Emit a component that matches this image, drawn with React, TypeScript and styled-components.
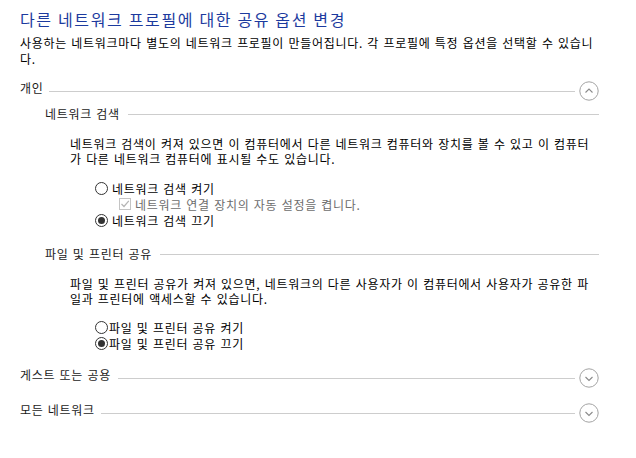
import React from "react";
import styled, { createGlobalStyle } from "styled-components";

const GlobalStyle = createGlobalStyle`
  html, body { margin: 0; padding: 0; background: #ffffff; }
  body {
    font-family: "Noto Sans CJK KR", "Noto Sans", sans-serif;
    font-size: 12px;
    letter-spacing: 0.7px;
    word-spacing: 1px;
    color: #000000;
  }
`;

const Page = styled.div`
  padding: 9px 37px 0 20px;
`;

const Title = styled.h1`
  margin: 0;
  font-size: 16px;
  font-weight: 400;
  line-height: 21px;
  letter-spacing: 1.65px;
  word-spacing: 0;
  color: #1c3a9e;
`;

const Intro = styled.p`
  margin: 5px 0 0;
  line-height: 16px;
`;

const HeaderRow = styled.div<{ $top: number; $indent?: number; $h?: number }>`
  display: flex;
  align-items: center;
  height: ${(p) => p.$h ?? 20}px;
  margin-top: ${(p) => p.$top}px;
  margin-left: ${(p) => p.$indent ?? 0}px;
`;

const HeaderLabel = styled.span<{ $lift?: number }>`
  line-height: 16px;
  padding-bottom: ${(p) => p.$lift ?? 0}px;
  color: #1a1a1a;
  white-space: nowrap;
`;

const Rule = styled.div<{ $gap?: number }>`
  flex: 1;
  height: 1px;
  background: #cdcdcd;
  margin-left: ${(p) => p.$gap ?? 7}px;
`;

const ToggleButton = styled.button`
  width: 20px;
  height: 20px;
  padding: 0;
  margin-left: 4px;
  border: none;
  background: transparent;
  display: flex;
  align-items: center;
  justify-content: center;
`;

const Description = styled.p<{ $top: number }>`
  margin: ${(p) => p.$top}px 0 0 50px;
  line-height: 15px;
`;

const OptionList = styled.div<{ $top: number }>`
  margin: ${(p) => p.$top}px 0 0 75px;
  display: flex;
  flex-direction: column;
`;

const OptionRow = styled.label<{ $gap: number; $sub?: boolean; $disabled?: boolean }>`
  display: flex;
  align-items: center;
  height: 16px;
  gap: ${(p) => p.$gap}px;
  margin-left: ${(p) => (p.$sub ? 24 : 0)}px;
  color: ${(p) => (p.$disabled ? "#6d6d6d" : "#000000")};
  white-space: nowrap;
`;

const RadioDot = styled.span<{ $checked?: boolean }>`
  box-sizing: border-box;
  width: 13px;
  height: 13px;
  border-radius: 50%;
  border: 1px solid #333333;
  background: #ffffff;
  display: flex;
  align-items: center;
  justify-content: center;
  flex: none;
  &::after {
    content: "";
    display: ${(p) => (p.$checked ? "block" : "none")};
    width: 7px;
    height: 7px;
    border-radius: 50%;
    background: #333333;
  }
`;

const CheckBox = styled.span`
  box-sizing: border-box;
  width: 12px;
  height: 12px;
  border: 1px solid #c4c4c4;
  background: #ffffff;
  display: flex;
  align-items: center;
  justify-content: center;
  flex: none;
`;

const Chevron: React.FC<{ up?: boolean }> = ({ up }) => (
  <svg width="20" height="20" viewBox="0 0 20 20">
    <circle cx="10" cy="10" r="9.2" fill="#fff" stroke="#a3a3a3" strokeWidth="1" />
    {up ? (
      <path d="M6.5 11.5 L10 8 L13.5 11.5" fill="none" stroke="#8a8a8a" strokeWidth="1.1" />
    ) : (
      <path d="M6.5 9 L10 12.5 L13.5 9" fill="none" stroke="#8a8a8a" strokeWidth="1.1" />
    )}
  </svg>
);

const SectionHeader: React.FC<{ label: string; top: number; up?: boolean; gap?: number }> = ({
  label,
  top,
  up,
  gap,
}) => (
  <HeaderRow $top={top}>
    <HeaderLabel $lift={6}>{label}</HeaderLabel>
    <Rule $gap={gap} />
    <ToggleButton aria-label={label}>
      <Chevron up={up} />
    </ToggleButton>
  </HeaderRow>
);

const SubHeader: React.FC<{ label: string; top: number }> = ({ label, top }) => (
  <HeaderRow $top={top} $indent={25} $h={16}>
    <HeaderLabel>{label}</HeaderLabel>
    <Rule $gap={8} />
  </HeaderRow>
);

const Radio: React.FC<{ label: string; checked?: boolean; gap: number }> = ({ label, checked, gap }) => (
  <OptionRow $gap={gap}>
    <RadioDot $checked={checked} />
    <span>{label}</span>
  </OptionRow>
);

export default function App() {
  return (
    <>
      <GlobalStyle />
      <Page>
        <Title>다른 네트워크 프로필에 대한 공유 옵션 변경</Title>
        <Intro>
          사용하는 네트워크마다 별도의 네트워크 프로필이 만들어집니다. 각 프로필에 특정 옵션을 선택할 수 있습니다.
        </Intro>

        <SectionHeader label="개인" top={14} up gap={6} />

        <SubHeader label="네트워크 검색" top={5} />
        <Description $top={14}>
          네트워크 검색이 켜져 있으면 이 컴퓨터에서 다른 네트워크 컴퓨터와 장치를 볼 수 있고 이 컴퓨터가 다른 네트워크 컴퓨터에 표시될 수도 있습니다.
        </Description>
        <OptionList $top={14}>
          <Radio label="네트워크 검색 켜기" gap={4} />
          <OptionRow $gap={4} $sub $disabled>
            <CheckBox>
              <svg width="10" height="10" viewBox="0 0 10 10">
                <path d="M1.5 5 L4 7.5 L8.8 1.8" fill="none" stroke="#b5b5b5" strokeWidth="1.2" />
              </svg>
            </CheckBox>
            <span>네트워크 연결 장치의 자동 설정을 켭니다.</span>
          </OptionRow>
          <Radio label="네트워크 검색 끄기" checked gap={4} />
        </OptionList>

        <SubHeader label="파일 및 프린터 공유" top={18} />
        <Description $top={14}>
          파일 및 프린터 공유가 켜져 있으면, 네트워크의 다른 사용자가 이 컴퓨터에서 사용자가 공유한 파일과 프린터에 액세스할 수 있습니다.
        </Description>
        <OptionList $top={13}>
          <Radio label="파일 및 프린터 공유 켜기" gap={1} />
          <Radio label="파일 및 프린터 공유 끄기" checked gap={1} />
        </OptionList>

        <SectionHeader label="게스트 또는 공용" top={17} gap={7} />
        <SectionHeader label="모든 네트워크" top={15} gap={6} />
      </Page>
    </>
  );
}
